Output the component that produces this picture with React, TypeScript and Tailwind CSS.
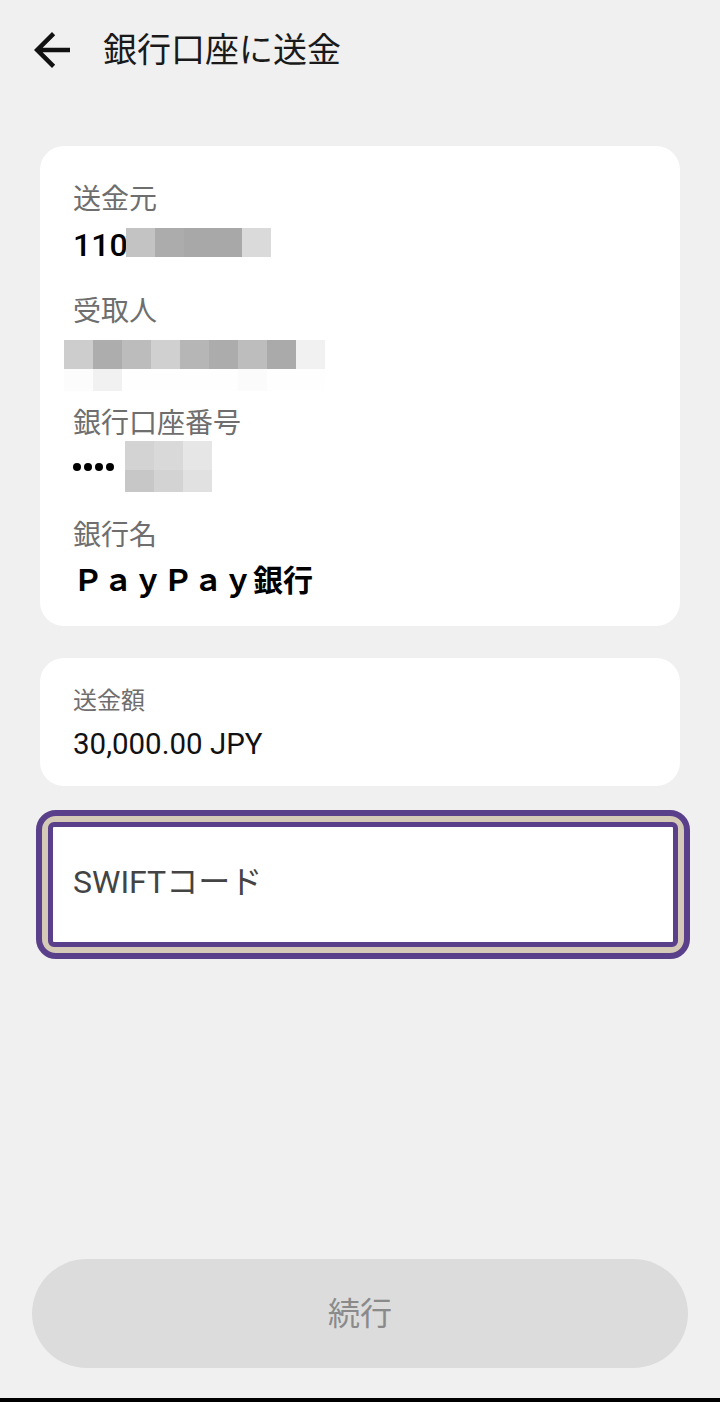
import React from "react";

const FONT = { fontFamily: 'Roboto, "Noto Sans CJK JP", "Noto Sans", sans-serif' };

function Mosaic({ rows }: { rows: { h: string; cells: string[] }[] }) {
  return (
    <div className="flex flex-col">
      {rows.map((r, i) => (
        <div key={i} className={`flex ${r.h}`}>
          {r.cells.map((c, j) => (
            <div key={j} className={`w-[29px] h-full ${c}`} />
          ))}
        </div>
      ))}
    </div>
  );
}

function Label({ children }: { children: React.ReactNode }) {
  return <div className="h-[36px] leading-[36px] text-[28px] text-[#6e6e6e]">{children}</div>;
}

export default function App() {
  return (
    <div className="h-[1402px] bg-[#f0f0f0] flex flex-col overflow-hidden" style={FONT}>
      {/* header */}
      <div className="h-[100px] flex items-center">
        <svg className="ml-[25px] w-[54px] h-[54px]" viewBox="0 0 24 24" fill="#111">
          <path d="M20 11H7.83l5.59-5.59L12 4l-8 8 8 8 1.41-1.41L7.83 13H20v-2z" />
        </svg>
        <div className="ml-[24px] text-[34px] leading-[40px] text-[#1a1a1a]">銀行口座に送金</div>
      </div>

      {/* card 1 */}
      <div className="mt-[46px] mx-[40px] bg-white rounded-[24px] pt-[36px] pb-[25px] pl-[33px] flex flex-col gap-[29px]">
        <div>
          <Label>送金元</Label>
          <div className="mt-[7px] h-[40px] flex items-start">
            <span className="text-[32px] leading-[40px] font-medium text-black">110</span>
            <div className="-ml-[2px] mt-[3px]">
              <Mosaic
                rows={[
                  {
                    h: "h-[29px]",
                    cells: ["bg-[#c3c3c3]", "bg-[#acacac]", "bg-[#a8a8a8]", "bg-[#a8a8a8]", "bg-[#dadada]"],
                  },
                ]}
              />
            </div>
          </div>
        </div>
        <div>
          <Label>受取人</Label>
          <div className="mt-[7px] h-[40px] flex items-start">
            <div className="-ml-[9px] mt-[3px]">
              <Mosaic
                rows={[
                  {
                    h: "h-[29px]",
                    cells: [
                      "bg-[#cdcdcd]",
                      "bg-[#adadad]",
                      "bg-[#bcbcbc]",
                      "bg-[#d0d0d0]",
                      "bg-[#b6b6b6]",
                      "bg-[#acacac]",
                      "bg-[#bdbdbd]",
                      "bg-[#aaaaaa]",
                      "bg-[#f1f1f1]",
                    ],
                  },
                  {
                    h: "h-[22px]",
                    cells: [
                      "bg-[#fcfcfc]",
                      "bg-[#f1f1f1]",
                      "bg-[#fefefe]",
                      "bg-[#fefefe]",
                      "bg-[#fefefe]",
                      "bg-[#fefefe]",
                      "bg-[#fbfbfb]",
                      "bg-[#fefefe]",
                      "bg-[#fefefe]",
                    ],
                  },
                ]}
              />
            </div>
          </div>
        </div>
        <div>
          <Label>銀行口座番号</Label>
          <div className="mt-[7px] h-[40px] flex items-start">
            <div className="mt-[14px] flex gap-[3px]">
              <div className="w-[8px] h-[8px] rounded-full bg-black" />
              <div className="w-[8px] h-[8px] rounded-full bg-black" />
              <div className="w-[8px] h-[8px] rounded-full bg-black" />
              <div className="w-[8px] h-[8px] rounded-full bg-black" />
            </div>
            <div className="ml-[11px] -mt-[8px]">
              <Mosaic
                rows={[
                  { h: "h-[29px]", cells: ["bg-[#d3d3d3]", "bg-[#d9d9d9]", "bg-[#e6e6e6]"] },
                  { h: "h-[22px]", cells: ["bg-[#c7c7c7]", "bg-[#d3d3d3]", "bg-[#e1e1e1]"] },
                ]}
              />
            </div>
          </div>
        </div>
        <div>
          <Label>銀行名</Label>
          <div className="mt-[7px] h-[40px] text-[30px] leading-[40px] font-bold text-black">ＰａｙＰａｙ銀行</div>
        </div>
      </div>

      {/* card 2 */}
      <div className="mt-[32px] mx-[40px] bg-white rounded-[24px] pt-[27px] pb-[22px] pl-[33px]">
        <div className="h-[32px] leading-[32px] text-[24px] text-[#6e6e6e]">送金額</div>
        <div className="mt-[7px] h-[40px] leading-[40px] text-[29.5px] text-[#111]">30,000.00 JPY</div>
      </div>

      {/* SWIFT input */}
      <div className="mt-[24px] ml-[36px] w-[654px] h-[149px] rounded-[20px] border-[6px] border-[#5a3f8a] bg-[#d5c9b8] p-[6px]">
        <div className="h-full rounded-[6px] border-[5px] border-[#5a3f8a] bg-white flex items-center pl-[20px]">
          <span className="text-[32px] leading-[40px] text-[#444] -mt-[6px]">SWIFTコード</span>
        </div>
      </div>

      <div className="flex-1" />

      {/* button */}
      <div className="mx-[32px] w-[656px] h-[109px] rounded-full bg-[#dcdcdc] flex items-center justify-center">
        <span className="text-[32px] leading-[40px] text-[#8a8a8a]">続行</span>
      </div>
      <div className="h-[30px]" />
      <div className="h-[4px] bg-black" />
    </div>
  );
}
